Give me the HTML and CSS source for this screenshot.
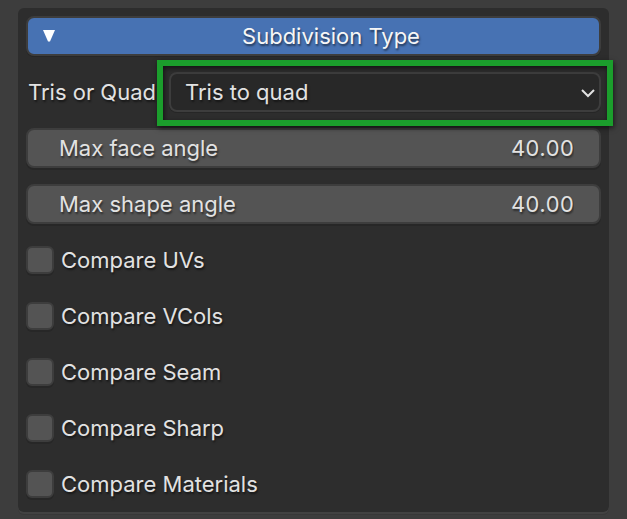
FILE: index.html
```html
<!DOCTYPE html>
<html lang="en">
<head>
<meta charset="utf-8">
<title>Subdivision Type</title>
<link rel="stylesheet" href="styles.css">
</head>
<body>
<form class="panel">
  <button class="header" type="button" aria-expanded="true">
    <svg class="triangle" viewBox="0 0 12 12" aria-hidden="true"><path d="M0 0H12L7 11.5H5Z"/></svg>
    <span class="title">Subdivision Type</span>
  </button>
  <div class="mode">
    <label class="mode-label" for="mode">Tris or Quad</label>
    <div class="dropdown">
      <select class="select" id="mode"><option>Tris to quad</option></select>
      <svg class="chevron" viewBox="0 0 14 9" aria-hidden="true"><path d="M1 1L7 7L13 1"/></svg>
    </div>
  </div>
  <div class="field">
    <label for="face">Max face angle</label>
    <input class="number" id="face" type="text" inputmode="decimal" value="40.00">
  </div>
  <div class="field">
    <label for="shape">Max shape angle</label>
    <input class="number" id="shape" type="text" inputmode="decimal" value="40.00">
  </div>
  <label class="check"><input class="box" type="checkbox">Compare UVs</label>
  <label class="check"><input class="box" type="checkbox">Compare VCols</label>
  <label class="check"><input class="box" type="checkbox">Compare Seam</label>
  <label class="check"><input class="box" type="checkbox">Compare Sharp</label>
  <label class="check"><input class="box" type="checkbox">Compare Materials</label>
</form>
</body>
</html>
```
FILE: styles.css
```css
* {
  box-sizing: border-box;
}

body {
  margin: 0;
  padding: 8px 18px 5px;
  background: #3d3d3d;
  color: #e2e2e2;
  font: 22px/36px Inter, "Liberation Sans", sans-serif;
  text-shadow: 1px 2px 2px rgba(0, 0, 0, 0.5);
}

button,
input,
select {
  margin: 0;
  color: inherit;
  font: inherit;
  text-shadow: inherit;
}

.panel {
  display: flex;
  flex-direction: column;
  gap: 16px;
  padding: 8px;
  border-radius: 6px;
  background: #2d2d2d;
  box-shadow: 0 2px #424242, 0 3px #383838;
}

.header,
.field,
.select {
  height: 40px;
  border: 2px solid #3d3d3d;
  border-radius: 8px;
}

.header {
  display: flex;
  align-items: center;
  padding: 0 0 0 15px;
  background: #4772b3;
  color: #f6f6f6;
  box-shadow: 0 1px #262626;
}

.triangle {
  width: 12px;
  height: 12px;
  fill: #fff;
}

.title {
  flex: 1;
  padding-left: 8px;
}

.mode {
  display: grid;
  grid-template-columns: 143px 1fr;
  align-items: center;
}

.mode-label {
  padding-left: 2px;
  white-space: nowrap;
}

.dropdown {
  position: relative;
}

.dropdown::after {
  content: "";
  position: absolute;
  inset: -12px -12px -14px;
  border: 6px solid #1b9e2c;
  box-shadow: 1px 2px 5px rgba(0, 0, 0, 0.6), inset 1px 2px 5px rgba(0, 0, 0, 0.6);
  pointer-events: none;
}

.select {
  display: block;
  width: 100%;
  padding: 0 32px 0 14px;
  appearance: none;
  background: #282828;
  box-shadow: 0 1px #262626;
}

.chevron {
  position: absolute;
  top: 17px;
  right: 6px;
  width: 14px;
  height: 9px;
  fill: none;
  stroke: #e2e2e2;
  stroke-width: 2;
}

.field {
  display: flex;
  justify-content: space-between;
  padding: 0 25px 0 31px;
  background: #545454;
  box-shadow: 0 2px #272727;
}

.number {
  width: 96px;
  height: 36px;
  padding: 0;
  border: 0;
  background: none;
  font-variant-numeric: tabular-nums;
  text-align: right;
}

.check {
  display: flex;
  align-items: center;
  gap: 7px;
  height: 40px;
}

.box {
  width: 28px;
  height: 28px;
  appearance: none;
  border: 2px solid #3d3d3d;
  border-radius: 6px;
  background: #545454;
  box-shadow: 0 2px #272727;
}
```
